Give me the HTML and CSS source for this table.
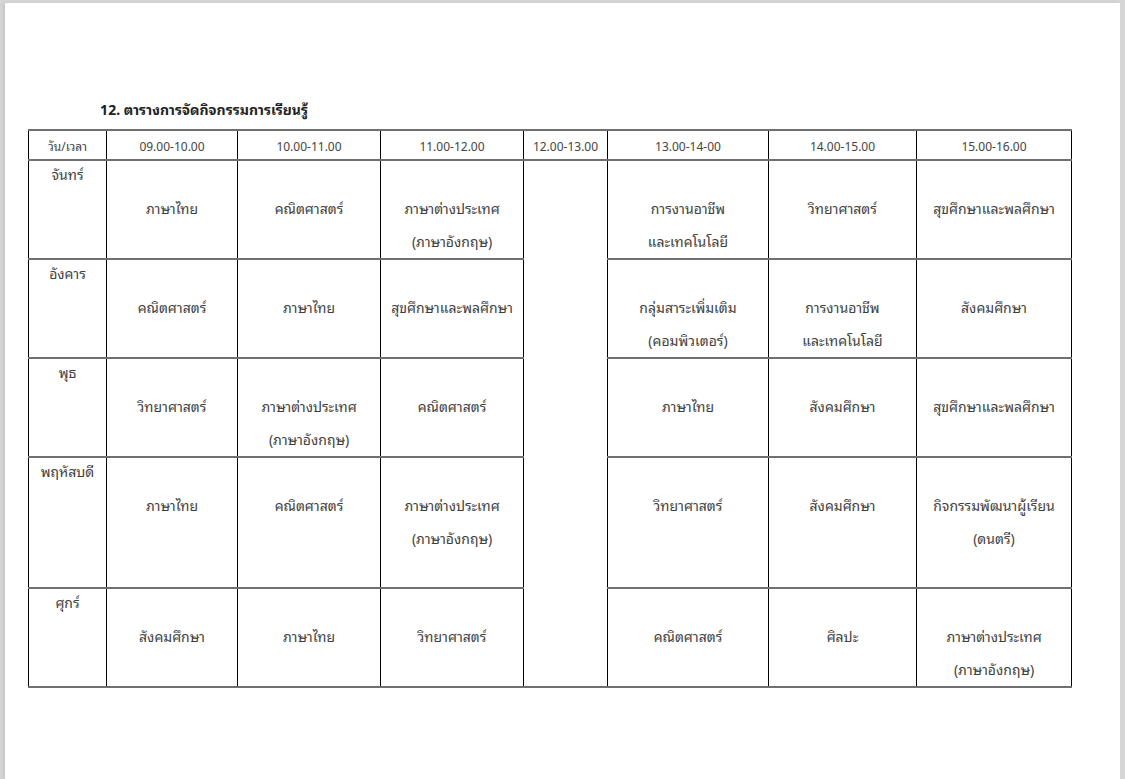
FILE: index.html
```html
<!DOCTYPE html>
<html lang="th">
<head>
<meta charset="utf-8">
<title>ตารางการจัดกิจกรรมการเรียนรู้</title>
<link rel="stylesheet" href="styles.css">
</head>
<body>
<div class="page">
  <h2 class="title">12. ตารางการจัดกิจกรรมการเรียนรู้</h2>
  <table class="tt">
    <colgroup>
      <col class="c-day"><col class="c1"><col class="c2"><col class="c3"><col class="c-lunch"><col class="c5"><col class="c6"><col class="c7">
    </colgroup>
    <thead>
      <tr class="hd">
        <th>วัน/เวลา</th><th>09.00-10.00</th><th>10.00-11.00</th><th>11.00-12.00</th><th>12.00-13.00</th><th>13.00-14-00</th><th>14.00-15.00</th><th>15.00-16.00</th>
      </tr>
    </thead>
    <tbody>
      <tr class="r">
        <td class="day">จันทร์</td>
        <td>ภาษาไทย</td>
        <td>คณิตศาสตร์</td>
        <td>ภาษาต่างประเทศ<br>(ภาษาอังกฤษ)</td>
        <td class="lunch" rowspan="5"></td>
        <td>การงานอาชีพ<br>และเทคโนโลยี</td>
        <td>วิทยาศาสตร์</td>
        <td>สุขศึกษาและพลศึกษา</td>
      </tr>
      <tr class="r">
        <td class="day">อังคาร</td>
        <td>คณิตศาสตร์</td>
        <td>ภาษาไทย</td>
        <td>สุขศึกษาและพลศึกษา</td>
        <td>กลุ่มสาระเพิ่มเติม<br>(คอมพิวเตอร์)</td>
        <td>การงานอาชีพ<br>และเทคโนโลยี</td>
        <td>สังคมศึกษา</td>
      </tr>
      <tr class="r">
        <td class="day">พุธ</td>
        <td>วิทยาศาสตร์</td>
        <td>ภาษาต่างประเทศ<br>(ภาษาอังกฤษ)</td>
        <td>คณิตศาสตร์</td>
        <td>ภาษาไทย</td>
        <td>สังคมศึกษา</td>
        <td>สุขศึกษาและพลศึกษา</td>
      </tr>
      <tr class="r tall">
        <td class="day">พฤหัสบดี</td>
        <td>ภาษาไทย</td>
        <td>คณิตศาสตร์</td>
        <td>ภาษาต่างประเทศ<br>(ภาษาอังกฤษ)</td>
        <td>วิทยาศาสตร์</td>
        <td>สังคมศึกษา</td>
        <td>กิจกรรมพัฒนาผู้เรียน<br>(ดนตรี)</td>
      </tr>
      <tr class="r">
        <td class="day">ศุกร์</td>
        <td>สังคมศึกษา</td>
        <td>ภาษาไทย</td>
        <td>วิทยาศาสตร์</td>
        <td>คณิตศาสตร์</td>
        <td>ศิลปะ</td>
        <td>ภาษาต่างประเทศ<br>(ภาษาอังกฤษ)</td>
      </tr>
    </tbody>
  </table>
</div>
</body>
</html>
```
FILE: styles.css
```css
html, body {
  margin: 0;
  padding: 0;
  height: 100%;
}
body {
  background: #d6d6d6;
  font-family: Tahoma, "Noto Sans Thai Looped", "Noto Sans Thai", "Noto Sans", "DejaVu Sans", sans-serif;
  color: #3f3f3f;
}
.page {
  box-sizing: border-box;
  margin: 3px 5px 0 5px;
  height: calc(100% - 3px);
  background: #fff;
  padding: 96px 0 0 23px;
  box-shadow: -2px 0 3px rgba(0,0,0,0.08);
}
.title {
  margin: 0 0 10px 72px;
  height: 20px;
  font-size: 14px;
  line-height: 20px;
  font-weight: bold;
  color: #222;
}
.tt {
  border-collapse: collapse;
  table-layout: fixed;
  width: 1043px;
}
.c-day { width: 78px; }
.c1 { width: 131px; }
.c2 { width: 143px; }
.c3 { width: 143px; }
.c-lunch { width: 84px; }
.c5 { width: 161px; }
.c6 { width: 148px; }
.c7 { width: 155px; }
.tt th, .tt td {
  border-left: 1px solid #000;
  border-right: 1px solid #000;
  border-top: 2px solid #707070;
  border-bottom: 2px solid #707070;
  padding: 0;
  text-align: center;
}
.hd th {
  height: 28px;
  font-weight: normal;
  font-size: 12px;
  color: #444;
  vertical-align: middle;
}
.r td {
  height: 99px;
  vertical-align: top;
  font-size: 14px;
  line-height: 33px;
  padding-top: 30px;
  box-sizing: border-box;
}
.r.tall td {
  height: 131px;
}
.r td.day {
  padding-top: 0;
  line-height: 26px;
}
.r td.lunch {
  padding: 0;
}
```
